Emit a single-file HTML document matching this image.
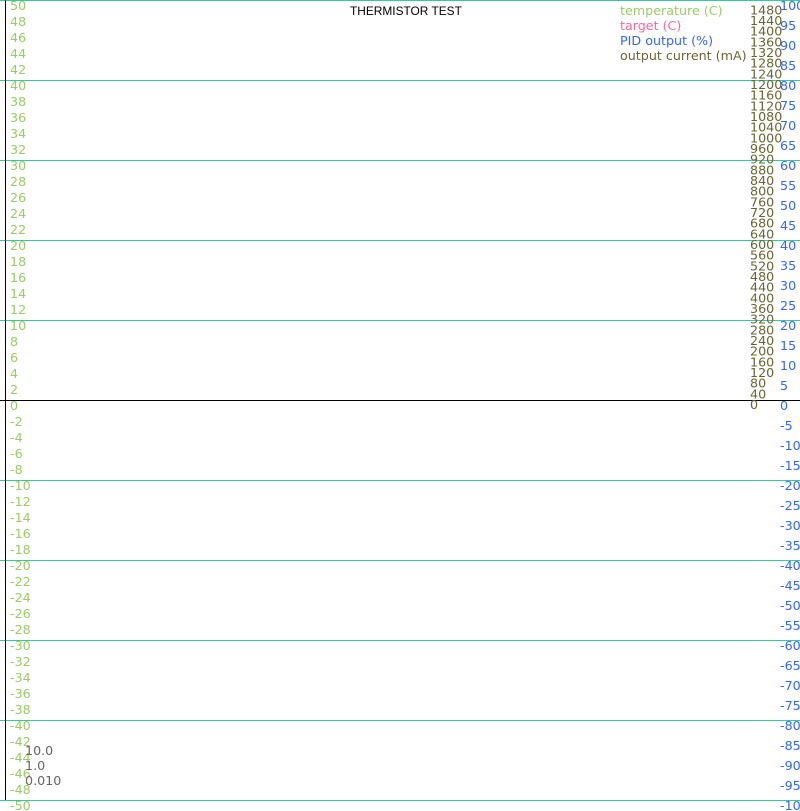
<!DOCTYPE html>
<html><head><meta charset="utf-8"><style>
html,body{margin:0;padding:0;background:#fff;overflow:hidden}
svg{display:block}
text{font-family:"DejaVu Sans","Liberation Sans",sans-serif;font-size:12.7px}
.l text{fill:#99cc66}.b text{fill:#3366ff}.c text{fill:#666633}
</style></head><body>
<svg width="800" height="811" xmlns="http://www.w3.org/2000/svg">
<g stroke="#33cc99" stroke-width="1">
<line x1="0" y1="0.5" x2="800" y2="0.5"/><line x1="0" y1="80.5" x2="800" y2="80.5"/><line x1="0" y1="160.5" x2="800" y2="160.5"/><line x1="0" y1="240.5" x2="800" y2="240.5"/><line x1="0" y1="320.5" x2="800" y2="320.5"/><line x1="0" y1="480.5" x2="800" y2="480.5"/><line x1="0" y1="560.5" x2="800" y2="560.5"/><line x1="0" y1="640.5" x2="800" y2="640.5"/><line x1="0" y1="720.5" x2="800" y2="720.5"/><line x1="0" y1="800.5" x2="800" y2="800.5"/>
</g>
<line x1="0" y1="400.5" x2="800" y2="400.5" stroke="#000"/>
<line x1="5.5" y1="0" x2="5.5" y2="800" stroke="#000"/>
<text x="350" y="15" style="font-family:'Liberation Sans',sans-serif;font-size:11.9px" fill="#000">THERMISTOR TEST</text>
<text x="620" y="15" fill="#99cc66">temperature (C)</text>
<text x="620" y="30" fill="#ff6699">target (C)</text>
<text x="620" y="45" fill="#3366ff">PID output (%)</text>
<text x="620" y="60" fill="#666633">output current (mA)</text>
<g class="l" transform="translate(0,-1)">
<text x="10" y="11">50</text><text x="10" y="27">48</text><text x="10" y="43">46</text><text x="10" y="59">44</text><text x="10" y="75">42</text><text x="10" y="91">40</text><text x="10" y="107">38</text><text x="10" y="123">36</text><text x="10" y="139">34</text><text x="10" y="155">32</text><text x="10" y="171">30</text><text x="10" y="187">28</text><text x="10" y="203">26</text><text x="10" y="219">24</text><text x="10" y="235">22</text><text x="10" y="251">20</text><text x="10" y="267">18</text><text x="10" y="283">16</text><text x="10" y="299">14</text><text x="10" y="315">12</text><text x="10" y="331">10</text><text x="10" y="347">8</text><text x="10" y="363">6</text><text x="10" y="379">4</text><text x="10" y="395">2</text><text x="10" y="411">0</text><text x="10" y="427">-2</text><text x="10" y="443">-4</text><text x="10" y="459">-6</text><text x="10" y="475">-8</text><text x="10" y="491">-10</text><text x="10" y="507">-12</text><text x="10" y="523">-14</text><text x="10" y="539">-16</text><text x="10" y="555">-18</text><text x="10" y="571">-20</text><text x="10" y="587">-22</text><text x="10" y="603">-24</text><text x="10" y="619">-26</text><text x="10" y="635">-28</text><text x="10" y="651">-30</text><text x="10" y="667">-32</text><text x="10" y="683">-34</text><text x="10" y="699">-36</text><text x="10" y="715">-38</text><text x="10" y="731">-40</text><text x="10" y="747">-42</text><text x="10" y="763">-44</text><text x="10" y="779">-46</text><text x="10" y="795">-48</text><text x="10" y="811">-50</text>
</g>
<g class="b" transform="translate(0,-1)">
<text x="780" y="11">100</text><text x="780" y="31">95</text><text x="780" y="51">90</text><text x="780" y="71">85</text><text x="780" y="91">80</text><text x="780" y="111">75</text><text x="780" y="131">70</text><text x="780" y="151">65</text><text x="780" y="171">60</text><text x="780" y="191">55</text><text x="780" y="211">50</text><text x="780" y="231">45</text><text x="780" y="251">40</text><text x="780" y="271">35</text><text x="780" y="291">30</text><text x="780" y="311">25</text><text x="780" y="331">20</text><text x="780" y="351">15</text><text x="780" y="371">10</text><text x="780" y="391">5</text><text x="780" y="411">0</text><text x="780" y="431">-5</text><text x="780" y="451">-10</text><text x="780" y="471">-15</text><text x="780" y="491">-20</text><text x="780" y="511">-25</text><text x="780" y="531">-30</text><text x="780" y="551">-35</text><text x="780" y="571">-40</text><text x="780" y="591">-45</text><text x="780" y="611">-50</text><text x="780" y="631">-55</text><text x="780" y="651">-60</text><text x="780" y="671">-65</text><text x="780" y="691">-70</text><text x="780" y="711">-75</text><text x="780" y="731">-80</text><text x="780" y="751">-85</text><text x="780" y="771">-90</text><text x="780" y="791">-95</text><text x="780" y="811">-100</text>
</g>
<g class="c">
<text x="750" y="409">0</text><text x="750" y="398.3">40</text><text x="750" y="387.7">80</text><text x="750" y="377">120</text><text x="750" y="366.3">160</text><text x="750" y="355.7">200</text><text x="750" y="345">240</text><text x="750" y="334.3">280</text><text x="750" y="323.7">320</text><text x="750" y="313">360</text><text x="750" y="302.3">400</text><text x="750" y="291.7">440</text><text x="750" y="281">480</text><text x="750" y="270.3">520</text><text x="750" y="259.7">560</text><text x="750" y="249">600</text><text x="750" y="238.3">640</text><text x="750" y="227.7">680</text><text x="750" y="217">720</text><text x="750" y="206.3">760</text><text x="750" y="195.7">800</text><text x="750" y="185">840</text><text x="750" y="174.3">880</text><text x="750" y="163.7">920</text><text x="750" y="153">960</text><text x="750" y="142.3">1000</text><text x="750" y="131.7">1040</text><text x="750" y="121">1080</text><text x="750" y="110.3">1120</text><text x="750" y="99.7">1160</text><text x="750" y="89">1200</text><text x="750" y="78.3">1240</text><text x="750" y="67.7">1280</text><text x="750" y="57">1320</text><text x="750" y="46.3">1360</text><text x="750" y="35.7">1400</text><text x="750" y="25">1440</text><text x="750" y="14.3">1480</text>
</g>
<g fill="#666666">
<text x="25" y="755">10.0</text><text x="25" y="770">1.0</text><text x="25" y="785">0.010</text>
</g>
</svg>
</body></html>
